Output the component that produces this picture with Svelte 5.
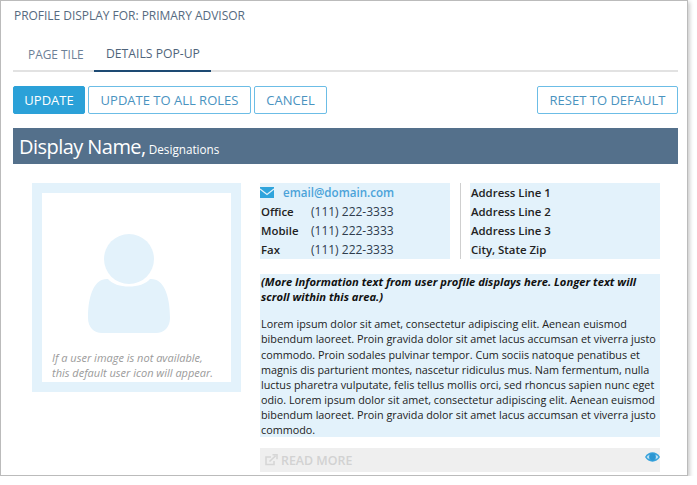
<script>
  const phones = [
    { label: 'Office', value: '(111) 222-3333' },
    { label: 'Mobile', value: '(111) 222-3333' },
    { label: 'Fax', value: '(111) 222-3333' }
  ];
  const address = ['Address Line 1', 'Address Line 2', 'Address Line 3', 'City, State Zip'];
  const lorem = [
    'Lorem ipsum dolor sit amet, consectetur adipiscing elit. Aenean euismod',
    'bibendum laoreet. Proin gravida dolor sit amet lacus accumsan et viverra justo',
    'commodo. Proin sodales pulvinar tempor. Cum sociis natoque penatibus et',
    'magnis dis parturient montes, nascetur ridiculus mus. Nam fermentum, nulla',
    'luctus pharetra vulputate, felis tellus mollis orci, sed rhoncus sapien nunc eget',
    'odio. Lorem ipsum dolor sit amet, consectetur adipiscing elit. Aenean euismod',
    'bibendum laoreet. Proin gravida dolor sit amet lacus accumsan et viverra justo',
    'commodo.'
  ];
</script>

<div class="panel">
  <div class="title">PROFILE DISPLAY FOR: PRIMARY ADVISOR</div>

  <div class="tabs">
    <div class="tab">PAGE TILE</div>
    <div class="tab active">DETAILS POP-UP</div>
  </div>

  <div class="actions">
    <button class="btn primary">UPDATE</button>
    <button class="btn roles">UPDATE TO ALL ROLES</button>
    <button class="btn cancel">CANCEL</button>
    <button class="btn reset">RESET TO DEFAULT</button>
  </div>

  <div class="banner"><span class="name">Display Name,</span> <span class="desig">Designations</span></div>

  <div class="details">
    <div class="photo">
      <div class="photo-inner">
        <svg class="avatar" width="82" height="99" viewBox="0 0 82 99">
          <circle cx="41" cy="25" r="25" fill="#e3f2fb" />
          <path d="M20 45 C28 55 54 55 62 45 C75 44 82 60 82 84 C82 93 76 99 68 99 L14 99 C6 99 0 93 0 84 C0 60 7 44 20 45 Z" fill="#e3f2fb" />
        </svg>
        <div class="caption">If a user image is not available,<br />this default user icon will appear.</div>
      </div>
    </div>

    <div class="info">
      <div class="contact-row">
        <div class="contact">
          <div class="email">
            <svg width="14" height="11" viewBox="0 0 14 11">
              <rect width="14" height="11" fill="#2fa4dc" />
              <path d="M0 2 L7 7.5 L14 2" fill="none" stroke="#e3f2fb" stroke-width="1.3" />
            </svg>
            <span>email@domain.com</span>
          </div>
          {#each phones as p}
            <div class="phone"><span class="label">{p.label}</span><span class="num">{p.value}</span></div>
          {/each}
        </div>
        <div class="divider"></div>
        <div class="address">
          {#each address as line}
            <div>{line}</div>
          {/each}
        </div>
      </div>

      <div class="more">
        <div class="more-head">(More Information text from user profile displays here. Longer text will<br />scroll within this area.)</div>
        <div class="more-body">
          {#each lorem as line}
            <div>{line}</div>
          {/each}
        </div>
      </div>

      <div class="read">
        <svg width="13" height="12" viewBox="0 0 13 12">
          <path d="M9 7 V10.5 H1 V3 H6" fill="none" stroke="#d6d6d6" stroke-width="1.6" />
          <path d="M4.5 7.5 L10.5 1.8 M7.5 0.8 H12 V5.2" fill="none" stroke="#d6d6d6" stroke-width="1.6" />
        </svg>
        <span>READ MORE</span>
        <svg class="eye" width="15" height="10" viewBox="0 0 15 10">
          <path d="M0 5 C3.5 -1.2 11.5 -1.2 15 5 C11.5 11.2 3.5 11.2 0 5 Z" fill="#38a3dc" />
          <path d="M1.6 5 C4 1.2 11 1.2 13.4 5 C11 8.6 4 8.6 1.6 5 Z" fill="#bfe2f5" />
          <circle cx="7.5" cy="5" r="3.4" fill="#2b96d2" />
        </svg>
      </div>
    </div>
  </div>
</div>

<style>
  :global(body) {
    background: #fff;
    font-family: "Open Sans", "Noto Sans", sans-serif;
  }

  .panel {
    box-sizing: border-box;
    width: 688px;
    height: 476px;
    padding: 0 9px 0 12px;
    background: #fff;
    border: 1px solid #bbb;
    box-shadow: 2px 2px 4px rgba(0, 0, 0, 0.2);
    overflow: hidden;
  }

  .title {
    margin-top: 7px;
    padding-left: 1px;
    height: 16px;
    line-height: 16px;
    font-size: 12px;
    letter-spacing: -0.03px;
    color: #566a80;
  }

  .tabs {
    display: flex;
    height: 31px;
    margin-top: 15px;
    border-bottom: 2px solid #e2e2e2;
  }

  .tab {
    box-sizing: border-box;
    width: 81px;
    padding: 7px 0 0 15px;
    font-size: 11.9px;
    line-height: 16px;
    color: #6c8097;
    margin-bottom: -2px;
  }

  .tab.active {
    width: 117px;
    padding: 7px 0 0 12px;
    font-size: 12.2px;
    color: #4f647b;
    border-bottom: 2px solid #1d4a73;
  }

  .actions {
    display: flex;
    gap: 3px;
    margin-top: 14px;
  }

  .btn {
    box-sizing: border-box;
    height: 28px;
    padding: 0;
    font-family: inherit;
    font-size: 13px;
    color: #4a93bf;
    background: #fff;
    border: 1px solid #6cbde6;
    border-radius: 2px;
    white-space: nowrap;
  }

  .primary { width: 72px; color: #fff; background: #2ba1d8; border-color: #2ba1d8; }
  .roles { width: 163px; }
  .cancel { width: 73px; }
  .reset { width: 141px; margin-left: auto; }

  .banner {
    height: 36px;
    line-height: 37px;
    margin-top: 14px;
    padding-left: 6px;
    background: #54708b;
    color: #fff;
    white-space: nowrap;
  }

  .name { font-size: 20px; letter-spacing: -0.55px; }
  .desig { font-size: 11.7px; margin-left: -1px; }

  .details {
    display: flex;
    align-items: flex-start;
    margin-top: 19px;
    padding-left: 19px;
  }

  .photo {
    box-sizing: border-box;
    width: 209px;
    height: 209px;
    padding: 10px;
    background: #e3f2fb;
    flex: none;
  }

  .photo-inner {
    display: flex;
    flex-direction: column;
    height: 189px;
    background: #fff;
  }

  .avatar { margin: 41px 0 0 46px; }

  .caption {
    margin-top: 17px;
    padding-left: 10px;
    font-size: 11px;
    line-height: 15px;
    font-style: italic;
    color: #9a9a9a;
    white-space: nowrap;
  }

  .info {
    width: 400px;
    margin-left: 19px;
    font-size: 11.4px;
    line-height: 19px;
    color: #222;
  }

  .contact-row {
    display: flex;
    height: 76px;
  }

  .contact {
    width: 190px;
    background: #e3f2fb;
    flex: none;
    white-space: nowrap;
  }

  .email {
    display: flex;
    align-items: center;
    gap: 9px;
    font-size: 11.6px;
    color: #4ba3d9;
    font-weight: 600;
  }

  .phone { display: flex; padding-left: 1px; }
  .label { width: 50px; font-weight: 600; }
  .num { font-size: 12px; color: #2e3c4d; }

  .divider {
    width: 1px;
    margin: 0 9px 0 10px;
    background: #cfcfcf;
    flex: none;
  }

  .address {
    flex: 1;
    box-sizing: border-box;
    padding-left: 1px;
    background: #e3f2fb;
    font-weight: 600;
    white-space: nowrap;
  }

  .more {
    box-sizing: border-box;
    height: 163px;
    margin-top: 15px;
    padding-left: 1px;
    background: #e3f2fb;
    white-space: nowrap;
    line-height: 15.15px;
    overflow: hidden;
  }

  .more-head {
    font-size: 11.2px;
    font-weight: 700;
    font-style: italic;
    color: #111;
  }

  .more-body {
    margin-top: 12px;
    font-size: 10.8px;
  }

  .read {
    position: relative;
    display: flex;
    align-items: center;
    gap: 3px;
    height: 24px;
    margin-top: 11px;
    padding-left: 5px;
    background: #efefef;
    color: #d2d2d2;
    font-size: 12.4px;
    font-weight: 600;
  }

  .eye {
    position: absolute;
    right: 0;
    top: 4px;
  }
</style>
